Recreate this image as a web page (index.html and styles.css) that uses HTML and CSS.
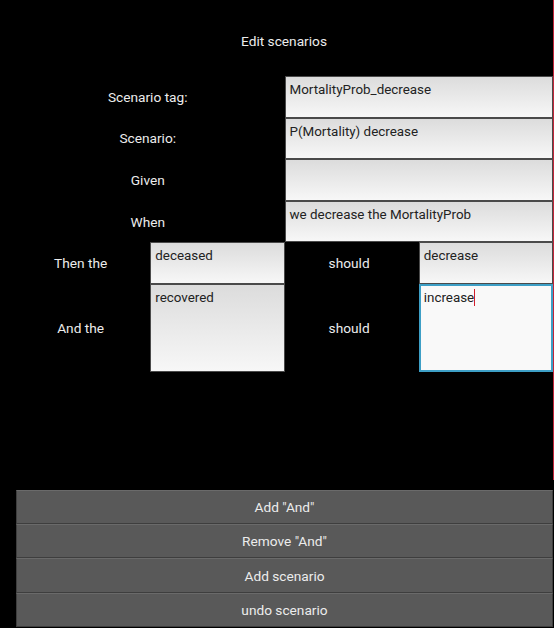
FILE: index.html
```html
<!DOCTYPE html>
<html>
<head>
<meta charset="utf-8">
<link rel="stylesheet" href="styles.css">
</head>
<body>
<div class="page">
  <div class="title">Edit scenarios</div>
  <div class="form">
    <div class="label span2">Scenario tag:</div>
    <div class="input span2">MortalityProb_decrease</div>
    <div class="label span2">Scenario:</div>
    <div class="input span2">P(Mortality) decrease</div>
    <div class="label span2">Given</div>
    <div class="input span2"></div>
    <div class="label span2">When</div>
    <div class="input span2">we decrease the MortalityProb</div>
    <div class="label">Then the</div>
    <div class="input">deceased</div>
    <div class="label">should</div>
    <div class="input">decrease</div>
    <div class="label">And the</div>
    <div class="input">recovered</div>
    <div class="label">should</div>
    <div class="input focused">increase<span class="caret"></span></div>
  </div>
  <div class="buttons">
    <div class="btn">Add "And"</div>
    <div class="btn">Remove "And"</div>
    <div class="btn">Add scenario</div>
    <div class="btn">undo scenario</div>
  </div>
  <div class="edge"></div>
</div>
</body>
</html>
```

FILE: styles.css
```css
html, body {
  margin: 0;
  padding: 0;
  background: #000;
}
.page {
  position: relative;
  width: 554px;
  height: 628px;
  display: flex;
  flex-direction: column;
  font-family: Roboto, "Liberation Sans", sans-serif;
  font-size: 13.7px;
  box-sizing: border-box;
  padding: 0 1px 1px 16px;
}
.title {
  color: #ececec;
  text-align: center;
  height: 76px;
  line-height: 18px;
  padding-top: 32px;
  box-sizing: border-box;
  width: 536px;
}
.form {
  width: 537px;
  display: grid;
  grid-template-columns: repeat(4, 1fr);
  grid-template-rows: repeat(5, 41.6px) 88px;
}
.span2 {
  grid-column: span 2;
}
.label {
  color: #ececec;
  display: flex;
  align-items: center;
  justify-content: center;
  padding-right: 5px;
}
.input {
  border: 1px solid #4a4a4a;
  background: linear-gradient(#dcdcdc, #f7f7f7);
  color: #222;
  font-size: 13.4px;
  padding: 4px 4px;
  line-height: 17px;
  box-sizing: border-box;
}
.input.focused {
  background: #f9f9f9;
  border: 2px solid #3d9fc6;
  padding: 3px 3px;
}
.caret {
  display: inline-block;
  width: 1px;
  height: 17px;
  background: #d21f2c;
  vertical-align: top;
}
.buttons {
  margin-top: auto;
  display: flex;
  flex-direction: column;
  width: 537px;
}
.btn {
  height: 34.3px;
  box-sizing: border-box;
  background: #595959;
  border: 1px solid #3e3e3e;
  border-top-color: #6a6a6a;
  color: #ececec;
  display: flex;
  align-items: center;
  justify-content: center;
}
.edge {
  position: absolute;
  top: 0;
  right: 0;
  width: 1px;
  height: 480px;
  background: #c2263a;
}
```
